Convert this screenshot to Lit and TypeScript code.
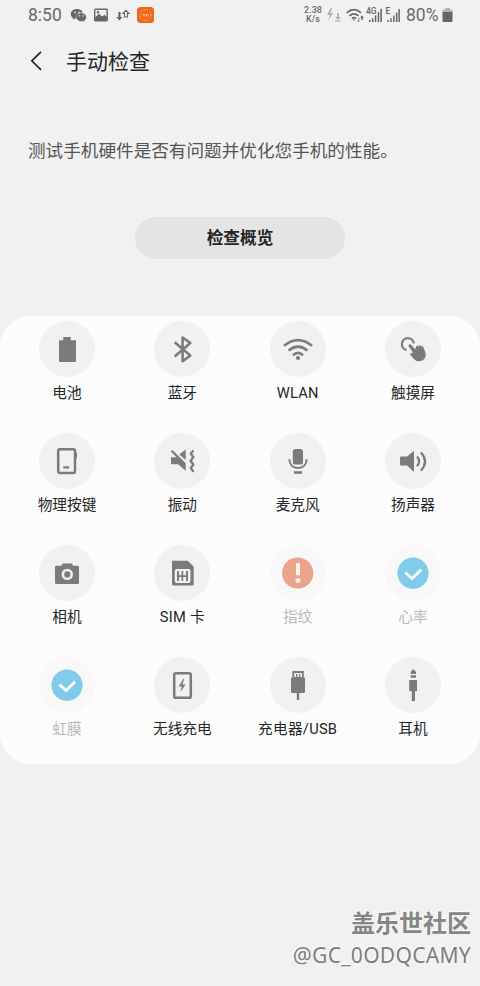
import { LitElement, html, css, svg } from "lit";
import { customElement } from "lit/decorators.js";
import { classMap } from "lit/directives/class-map.js";

const check = svg`
  <circle cx="28" cy="28.2" r="15.6" fill="#80cbe9"/>
  <path d="M20.3 27.5 27 33.6 36.2 24.6" fill="none" stroke="#f4fafc" stroke-width="2.9"/>`;

const icons = {
  battery: svg`<path d="M24.3 16h7.4v3.3H36a1 1 0 0 1 1 1V40a1 1 0 0 1-1 1H21a1 1 0 0 1-1-1V20.3a1 1 0 0 1 1-1h3.3z"/>`,
  bluetooth: svg`<path class="line" d="M20.7 21.3 36.3 34.6 28.6 40.2V16.5L36.3 22 20.7 35.4" stroke-width="2.6" stroke-linejoin="round"/>`,
  wifi: svg`
    <path class="line" stroke-width="2.6" d="M14 24.8Q28 13.4 42 24.8M18.6 29.6Q28 21.7 37.4 29.6M23 34.2Q28 29.7 33 34.2"/>
    <circle cx="28" cy="37" r="2.1"/>`,
  touch: svg`
    <path class="line" stroke-width="2.3" d="M21.5 29A6 6 0 1 1 28.8 22.3"/>
    <path d="M23.6 25.2c-.6-1.600 1.300-2.700 2.500-1.500l4.400 4.600.6-2.900c.7-1.200 2.100-.8 2.300.5l.5-1.200c.9-.9 2.100-.3 2.200.9.9-.8 2.100-.4 2.400 1l1.600 3.900c1.300 3.700.6 6.500-1.700 8.300-2.700 2.100-6.600 1.900-9-.4l-3.800-4.100c-.9-1.500.2-3 1.800-2.500l.9.200z"/>`,
  keys: svg`
    <rect class="line" x="19.2" y="16.2" width="16.8" height="23.8" rx="1.8" stroke-width="2.5"/>
    <path d="M36.5 19.7H38v5.600h-1.500zM24.300 33.300h5.800v2.100h-5.800z"/>`,
  vibrate: svg`
    <path class="line" stroke-width="2.2" d="M17.6 17.7 31 31.1"/>
    <path d="M17 24.300h6.600L31.700 31.300v6.500L24 31.300h-7zM25.300 21.500l6.400-4.900V27z"/>
    <path class="line" stroke-width="2.3" d="M39.5 17.5 36.8 20.5 39.3 24 36.6 28 39.3 31.500 36.800 35 39.500 38.800"/>`,
  mic: svg`
    <rect x="22.8" y="16" width="10.2" height="15.5" rx="2.6"/>
    <path class="line" stroke-width="2" d="M19.300 26.300c.2 5.200 3.500 8.600 8.700 8.600s8.500-3.400 8.700-8.600"/>
    <path d="M24 38.200h8v2.600h-8z"/>`,
  speaker: svg`
    <path d="M16 23.600h6L29 18v21l-7-6.500h-6a1 1 0 0 1-1-1v-6.900a1 1 0 0 1 1-1z"/>
    <path class="line" stroke-width="2.2" d="M32 23.500Q36.300 28.300 32 33.200M35.900 19.600Q44.300 28.500 35.900 37.700"/>`,
  camera: svg`
    <path d="M17.300 20.800H22.500l1-2.300h9.500l1 2.300h4.700a1.300 1.300 0 0 1 1.300 1.300v15.600a1.300 1.300 0 0 1-1.300 1.300H17.300A1.300 1.300 0 0 1 16 37.700V22.100a1.300 1.300 0 0 1 1.300-1.300z"/>
    <circle cx="28.3" cy="29.4" r="4.4" fill="none" stroke="#f1f1f1" stroke-width="2.6"/>`,
  sim: svg`
    <path d="M18 15.800h15.700l6 5.700V39a1.500 1.500 0 0 1-1.500 1.500H19.500A1.500 1.500 0 0 1 18 39z"/>
    <rect x="20.800" y="24" width="15.700" height="14" rx="2" fill="#f1f1f1"/>
    <path d="M23 26h2v10h-2zM27.500 26h1.700v10h-1.700zM32 26h2v10h-2zM23 30.200h11v1.800H23z"/>`,
  alert: svg`
    <circle cx="27.7" cy="28" r="15.6" fill="#e9a48a"/>
    <path fill="#faf1ee" d="M26 18h4v12.300h-4z"/><circle cx="28" cy="35.6" r="2.5" fill="#faf1ee"/>`,
  check,
  wireless: svg`
    <rect class="line" x="20.2" y="16.2" width="16.6" height="24.6" rx="1.6" stroke-width="2.5"/>
    <path d="M29.300 22 24.600 29.500h3.200L26.500 35l5.100-7.600h-3.200L30.300 22z"/>`,
  usb: svg`
    <path d="M22.400 14h11.400v6.800H35v14a1.200 1.200 0 0 1-1.200 1.200H29.200v7h-2.400v-7h-4.600A1.200 1.200 0 0 1 21 34.800v-14h1.400z"/>
    <path fill="#f1f1f1" d="M24.200 16h7.800v4h-7.800z"/><path d="M26 17h1.300v3H26zM29 17h1.300v3H29z"/>`,
  jack: svg`<path d="M28.300 12 31 15v2h-5.300v-2zM25.700 18.300H31v2.500h-5.300zM24.200 23H32v11.200h-2V44h-3.200v-9.800h-2.600z"/>`,
};

const tests: { label: string; icon: keyof typeof icons; off?: boolean }[] = [
  { label: "电池", icon: "battery" },
  { label: "蓝牙", icon: "bluetooth" },
  { label: "WLAN", icon: "wifi" },
  { label: "触摸屏", icon: "touch" },
  { label: "物理按键", icon: "keys" },
  { label: "振动", icon: "vibrate" },
  { label: "麦克风", icon: "mic" },
  { label: "扬声器", icon: "speaker" },
  { label: "相机", icon: "camera" },
  { label: "SIM 卡", icon: "sim" },
  { label: "指纹", icon: "alert", off: true },
  { label: "心率", icon: "check", off: true },
  { label: "虹膜", icon: "check", off: true },
  { label: "无线充电", icon: "wireless" },
  { label: "充电器/USB", icon: "usb" },
  { label: "耳机", icon: "jack" },
];

@customElement("status-bar")
class StatusBar extends LitElement {
  static styles = css`
    :host { display: flex; height: 30px; padding: 0 27px 0 28px; align-items: center; justify-content: space-between; color: #6a6a6a; font-family: Roboto, sans-serif; box-sizing: border-box; }
    .side { display: flex; align-items: center; }
    .time { font-size: 17.5px; width: 42px; }
    .pct { font-size: 17.5px; margin-left: 5px; width: 36px; }
    .rate { font-size: 9px; font-weight: 500; line-height: 9px; text-align: center; width: 20px; padding-bottom: 1px; }
    svg { display: block; fill: #666; }
    .line { fill: none; stroke: #666; }
    .net { font: 500 8.5px Roboto, sans-serif; }
  `;
  render() {
    return html`
      <div class="side">
        <span class="time">8:50</span>
        <svg width="84" height="18" viewBox="70 5 84 18">
          <path d="M77 8c-3.600 0-6.200 2.200-6.200 5 0 1.600.8 3 2.200 3.900l-.5 1.800 2.200-1.100 2 .4c-.7-4 2.700-6.600 6.200-6.500C82.300 9.400 80 8 77 8z"/>
          <path d="M81.300 11.900c-3 0-5.100 1.900-5.100 4.300s2.300 4.300 5.100 4.300l1.600-.2 1.900 1-.5-1.600c1.300-.8 2.100-2 2.100-3.500 0-2.400-2.200-4.300-5.100-4.300z" stroke="#f1f1f1" stroke-width=".5"/>
          <path fill="#f1f1f1" d="M74.300 10.800h1.400v1.400h-1.400zM78.300 10.800h1.400v1.400h-1.400zM79 14.200h1.200v1.200H79zM82.600 14.200h1.200v1.200h-1.200z"/>
          <rect class="line" x="94.7" y="8.2" width="12.5" height="11.6" rx=".8" stroke-width="1.4"/>
          <path d="M95 19v-2.500l4-3.700 3 2.800 2.500-1.800 2.800 2.400V19z"/><circle cx="98" cy="11.3" r="1.2"/>
          <path d="M118.300 11h2.200v5h2l-3.100 3.400-3.100-3.400h2z"/>
          <path class="line" stroke-width="1.1" d="m126 9.300 3 3.100h-1.500V16h-3v-3.600H123z"/>
          <rect x="137" y="6" width="17" height="16" rx="3.5" fill="#ee6719"/>
          <circle cx="145.5" cy="14" r="5.5" fill="none" stroke="#f8b98c" stroke-dasharray="1.5 1.4"/>
          <path d="m143 12.800 1.200 2.600 1.200-2.600M146.500 13v2.400M148 13v2.400" fill="none" stroke="#fbd2b5" stroke-width=".9"/>
        </svg>
      </div>
      <div class="side">
        <div class="rate">2.38<br />K/s</div>
        <svg width="78" height="18" viewBox="323 5 78 18">
          <path fill="#b4b4b4" d="m330.500 7-3.500 7h2.700l-1.500 5.500 5-7.500h-2.700l1.800-5zM337 12h2v4h2l-3 3-3-3h2zM335 19.500h6v1.300h-6z"/>
          <path class="line" stroke-width="1.7" d="M346.800 11.800Q354 5.500 361 11.800M349.400 14.800Q354 10.800 358.500 14.800M352 17.600Q354 15.800 356 17.600"/>
          <path d="M352.800 18.500h2.600l-1.300 1.500zM362 14.500l2 2.200h-1.300v2.300h-1.400v-2.300H360z"/>
          <path fill="#a5a5a5" d="M358 16.500h1.400v3h1.200l-1.900 2-1.900-2h1.200z"/>
          <text class="net" x="366" y="13">4G</text>
          <path d="M369 19h1.500v2H369zM371.900 17.200h1.500V21h-1.500zM374.800 14.500h1.500V21h-1.500zM377.700 11h1.500v10h-1.500zM380.300 7.800h1.600V21h-1.600z"/>
          <text class="net" x="385.5" y="13">E</text>
          <path d="M387.300 19h1.500v2h-1.500zM390.200 17.200h1.500V21h-1.500zM393.100 14.500h1.500V21h-1.500zM395.900 11.500h1.500V21h-1.500zM398.400 8h1.500v13h-1.500z"/>
        </svg>
        <span class="pct">80%</span>
        <svg width="11" height="16" viewBox="0 0 11 16">
          <path fill="#b5b5b5" d="M3 1h5v1.500h2.500V6H.5V2.500H3z"/><path d="M.5 5h10v9a1 1 0 0 1-1 1h-8a1 1 0 0 1-1-1z"/>
        </svg>
      </div>
    `;
  }
}

@customElement("test-item")
class TestItem extends LitElement {
  static properties = { label: {}, icon: {}, off: { type: Boolean } };
  declare label: string;
  declare icon: keyof typeof icons;
  declare off: boolean;
  static styles = css`
    :host { display: flex; height: 112px; min-width: 0; }
    .item { flex: 1; display: flex; flex-direction: column; align-items: center; color: #252525; }
    .disc { width: 56px; height: 56px; border-radius: 50%; background: #f1f1f1; }
    .label { margin-top: 5px; font-size: 14.67px; line-height: 22px; white-space: nowrap; }
    .latin .label { letter-spacing: 0.25px; }
    .off .disc { background: #f8f8f8; }
    .off .label { color: #b9b9b9; }
    svg { display: block; fill: #7b7b7b; }
    .line { fill: none; stroke: #7b7b7b; }
  `;
  render() {
    return html`<div class=${classMap({ item: true, off: this.off, latin: /[A-Z]/.test(this.label) })}>
      <div class="disc"><svg width="56" height="56" viewBox="0 0 56 56">${icons[this.icon]}</svg></div>
      <div class="label">${this.label}</div>
    </div>`;
  }
}

@customElement("app-root")
class AppRoot extends LitElement {
  static styles = css`
    :host { display: flex; flex-direction: column; height: 986px; background: #f1f1f1; color: #252525; font-family: Roboto, "Noto Sans CJK SC", sans-serif; }
    .header { display: flex; align-items: center; height: 62px; padding-left: 29px; gap: 22px; }
    .header svg { fill: none; stroke: #252525; stroke-width: 1.7; }
    .title { font-size: 21px; font-weight: 400; margin: 0; padding-top: 2px; line-height: 30px; }
    .intro { margin: 46px 0 0 28px; font-size: 17.63px; line-height: 26px; color: #555; white-space: nowrap; }
    .overview { align-self: center; margin-top: 53px; width: 210px; height: 42px; border: 0; border-radius: 21px; padding: 2px 0 0; background: #e4e4e4; color: #252525; font: 700 16.67px/40px Roboto, "Noto Sans CJK SC", sans-serif; }
    .card { display: grid; grid-template-columns: repeat(4, 1fr); height: 443px; margin-top: 57px; padding: 5px 9.33px 0; border-radius: 31px; background: #fcfcfc; }
    .mark { margin: auto 9px 16px 0; text-align: right; color: #7d7d7d; text-shadow: -1px -1px 1px #fff; }
    .site { font-size: 24px; font-weight: 700; line-height: 32px; color: #858585; text-shadow: -1px -1px 0 #fff, -1px 0 1px #eee; }
    .user { font-family: "Noto Sans", sans-serif; font-size: 21px; letter-spacing: 0.3px; line-height: 30px; }
  `;
  render() {
    return html`
      <status-bar></status-bar>
      <div class="header">
        <svg width="15" height="22" viewBox="0 0 15 22"><path d="M12 1.800 2.800 10.800 12 19.800" /></svg>
        <h1 class="title">手动检查</h1>
      </div>
      <div class="intro">测试手机硬件是否有问题并优化您手机的性能。</div>
      <button class="overview">检查概览</button>
      <div class="card">
        ${tests.map((t) => html`<test-item .label=${t.label} .icon=${t.icon} .off=${!!t.off}></test-item>`)}
      </div>
      <div class="mark">
        <div class="site">盖乐世社区</div>
        <div class="user">@GC_0ODQCAMY</div>
      </div>
    `;
  }
}
